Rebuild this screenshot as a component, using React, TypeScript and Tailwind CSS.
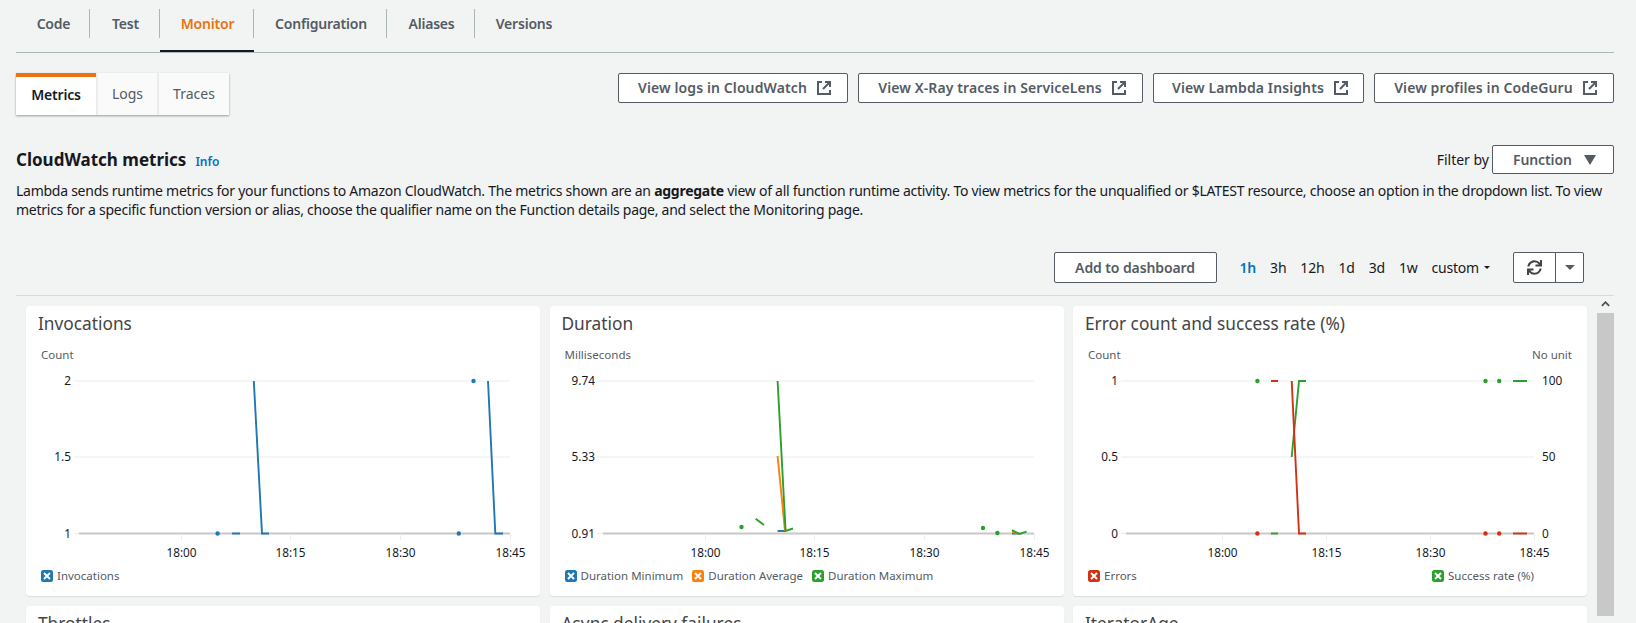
import { ReactNode } from 'react';
import { FaSync } from 'react-icons/fa';

const BLUE = '#1f77b4';
const ORANGE = '#ff7f0e';
const GREEN = '#2ca02c';
const RED = '#d13212';

function ExternalIcon() {
  return (
    <svg viewBox="0 0 16 16" className="w-4 h-4 shrink-0" fill="none" stroke="currentColor" strokeWidth="2">
      <path d="M6 2H2v12h12v-4" />
      <path d="M9 2h5v5" />
      <path d="M14 2L7 9" />
    </svg>
  );
}

function OutlineButton({ label, className }: { label: string; className: string }) {
  return (
    <button
      className={`h-[30px] pl-[4px] flex items-center justify-center gap-[9px] bg-white border border-[#545b64] rounded-[2px] text-sm font-semibold tracking-[0.1px] text-[#545b64] whitespace-nowrap ${className}`}
    >
      {label}
      <ExternalIcon />
    </button>
  );
}

function LegendItem({ color, label }: { color: string; label: string }) {
  return (
    <div className="flex items-center gap-[4px]">
      <svg viewBox="0 0 12 12" className="w-3 h-3 shrink-0">
        <rect width="12" height="12" rx="2.5" fill={color} />
        <path d="M3 3l6 6M9 3l-6 6" stroke="#fff" strokeWidth="2" />
      </svg>
      <span className="text-[11.5px] leading-4 text-[#545b64] whitespace-nowrap">{label}</span>
    </div>
  );
}

type Axis = { left: number; gridStart: number; baseStart: number; right: number; ticks: number[]; labelX: number };

function ChartFrame({
  axis,
  labels,
  rightLabels,
  children,
}: {
  axis: Axis;
  labels: string[];
  rightLabels?: string[];
  children: ReactNode;
}) {
  const rows = [381, 457, 533.5];
  const tickNames = ['18:00', '18:15', '18:30', '18:45'];
  return (
    <svg viewBox={`${axis.left} 370 514 190`} className="block w-[514px] h-[190px] mt-[7px]" fontSize="11.8" fill="#16191f">
      {rows.slice(0, 2).map((y) => (
        <line key={y} x1={axis.gridStart} x2={axis.right} y1={y} y2={y} stroke="#eaeded" />
      ))}
      <line x1={axis.gridStart} x2={axis.baseStart} y1={533.5} y2={533.5} stroke="#eaeded" />
      <line x1={axis.baseStart} x2={axis.right} y1={533.5} y2={533.5} stroke="#c8c8c8" strokeWidth="2" />
      {axis.ticks.map((x) => (
        <line key={x} x1={x} x2={x} y1={534} y2={540} stroke="#eaeded" />
      ))}
      {axis.ticks.map((x, i) => (
        <text key={x} x={x} y={557} textAnchor="middle">
          {tickNames[i]}
        </text>
      ))}
      {labels.map((t, i) => (
        <text key={t} x={axis.labelX} y={rows[i] + 4} textAnchor="end">
          {t}
        </text>
      ))}
      {rightLabels?.map((t, i) => (
        <text key={t} x={axis.right + 8} y={rows[i] + 4}>
          {t}
        </text>
      ))}
      {children}
    </svg>
  );
}

function Series({ d, color }: { d: string; color: string }) {
  return <path d={d} fill="none" stroke={color} strokeWidth="1.9" />;
}

function Dot({ x, y, color }: { x: number; y: number; color: string }) {
  return <circle cx={x} cy={y} r="2.2" fill={color} />;
}

function Card({ title, children }: { title: string; children?: ReactNode }) {
  return (
    <div className="bg-white rounded-[4px] shadow-[0_1px_1px_rgba(0,28,36,0.1)] h-[290px] overflow-hidden">
      <h3 className="text-[17.3px] leading-[24px] text-[#444] pt-[6px] pl-3">{title}</h3>
      {children}
    </div>
  );
}

function InvocationsCard() {
  return (
    <Card title="Invocations">
      <div className="text-[11.5px] leading-4 text-[#545b64] pl-[15px] mt-[11px]">Count</div>
      <ChartFrame
        axis={{ left: 26, gridStart: 74, baseStart: 79, right: 510, ticks: [181.5, 290.5, 400.5, 510.5], labelX: 71 }}
        labels={['2', '1.5', '1']}
      >
        <Series d="M253.8 381L262 533.5H269" color={BLUE} />
        <Series d="M488 381L495.3 533.5H503" color={BLUE} />
        <Series d="M232 533.5H240" color={BLUE} />
        <Dot x={217.6} y={533.5} color={BLUE} />
        <Dot x={458.8} y={533.5} color={BLUE} />
        <Dot x={473.5} y={381} color={BLUE} />
      </ChartFrame>
      <div className="flex pl-[15px] mt-[8px]">
        <LegendItem color={BLUE} label="Invocations" />
      </div>
    </Card>
  );
}

function DurationCard() {
  return (
    <Card title="Duration">
      <div className="text-[11.5px] leading-4 text-[#545b64] pl-[15px] mt-[11px]">Milliseconds</div>
      <ChartFrame
        axis={{ left: 550, gridStart: 597, baseStart: 603, right: 1034, ticks: [705.5, 814.5, 924.5, 1034.5], labelX: 595 }}
        labels={['9.74', '5.33', '0.91']}
      >
        <Series d="M777.6 531H785.6" color={BLUE} />
        <Series d="M1012 533.5H1019" color={BLUE} />
        <Series d="M777.6 456L785 531" color={ORANGE} />
        <Series d="M1012 531.5L1019.4 534" color={ORANGE} />
        <Series d="M777.6 381L785.6 531L793 528.5" color={GREEN} />
        <Series d="M755.6 518.7L764 525" color={GREEN} />
        <Series d="M1012 530L1019.4 534L1026.6 531.7" color={GREEN} />
        <Dot x={741.5} y={527} color={GREEN} />
        <Dot x={983} y={528} color={GREEN} />
        <Dot x={997.4} y={533} color={GREEN} />
      </ChartFrame>
      <div className="flex pl-[15px] mt-[8px] gap-[9px]">
        <LegendItem color={BLUE} label="Duration Minimum" />
        <LegendItem color={ORANGE} label="Duration Average" />
        <LegendItem color={GREEN} label="Duration Maximum" />
      </div>
    </Card>
  );
}

function ErrorsCard() {
  return (
    <Card title="Error count and success rate (%)">
      <div className="flex justify-between text-[11.5px] leading-4 text-[#545b64] pl-[15px] pr-[15px] mt-[11px]">
        <span>Count</span>
        <span>No unit</span>
      </div>
      <ChartFrame
        axis={{ left: 1073, gridStart: 1121, baseStart: 1126, right: 1534, ticks: [1222.5, 1326.5, 1430.5, 1534.5], labelX: 1118 }}
        labels={['1', '0.5', '0']}
        rightLabels={['100', '50', '0']}
      >
        <Series d="M1291.7 457L1299 381H1306" color={GREEN} />
        <Series d="M1291.7 381L1299 533.5H1306" color={RED} />
        <Series d="M1271 381H1278" color={RED} />
        <Series d="M1271 533.5H1278" color={GREEN} />
        <Series d="M1513 381H1527" color={GREEN} />
        <Series d="M1513 533.5H1527" color={RED} />
        <Dot x={1257.4} y={381} color={GREEN} />
        <Dot x={1257.4} y={533.5} color={RED} />
        <Dot x={1485.5} y={381} color={GREEN} />
        <Dot x={1499.2} y={381} color={GREEN} />
        <Dot x={1485.5} y={533.5} color={RED} />
        <Dot x={1499.2} y={533.5} color={RED} />
      </ChartFrame>
      <div className="flex justify-between pl-[15px] pr-[53px] mt-[8px]">
        <LegendItem color={RED} label="Errors" />
        <LegendItem color={GREEN} label="Success rate (%)" />
      </div>
    </Card>
  );
}

export default function App() {
  const tabs = [
    { name: 'Code', width: 'w-[74px]' },
    { name: 'Test', width: 'w-[70px]' },
    { name: 'Monitor', width: 'w-[94px]' },
    { name: 'Configuration', width: 'w-[133px]' },
    { name: 'Aliases', width: 'w-[88px]' },
    { name: 'Versions', width: 'w-[96px]' },
  ];
  const ranges = ['1h', '3h', '12h', '1d', '3d', '1w'];

  return (
    <div className="h-[623px] overflow-hidden bg-[#f2f3f3] pl-4 pr-[22px] font-['Noto_Sans',sans-serif] text-[#16191f]">
      <div className="flex items-start h-[53px] border-b border-[#aab7b8]">
        {tabs.map((tab, i) => (
          <div key={tab.name} className={`relative h-[52px] pt-[9px] ${tab.width}`}>
            <div
              className={`h-[29px] pl-[2px] flex items-center justify-center text-sm font-semibold tracking-[-0.2px] ${
                i < tabs.length - 1 ? 'border-r border-[#aab7b8]' : ''
              } ${tab.name === 'Monitor' ? 'text-[#ec7211]' : 'text-[#545b64]'}`}
            >
              {tab.name}
            </div>
            {tab.name === 'Monitor' && <div className="absolute left-0 right-0 bottom-0 h-[2px] bg-[#16191f]" />}
          </div>
        ))}
      </div>

      <div className="flex items-start justify-between mt-[20px]">
        <div className="flex h-[42px] shadow-[0_1px_2px_rgba(0,28,36,0.4)]">
          <div className="w-[80px] pb-[3px] bg-white border-t-4 border-[#ec7211] flex items-center justify-center text-sm font-semibold tracking-[-0.2px]">
            Metrics
          </div>
          <div className="w-[61px] bg-[#fafafa] border-l-2 border-[#eaeded] flex items-center justify-center text-sm text-[#545b64]">
            Logs
          </div>
          <div className="w-[72px] bg-[#fafafa] border-l-2 border-[#eaeded] flex items-center justify-center text-sm text-[#545b64]">
            Traces
          </div>
        </div>
        <div className="flex gap-[10px]">
          <OutlineButton label="View logs in CloudWatch" className="w-[230px]" />
          <OutlineButton label="View X-Ray traces in ServiceLens" className="w-[285px]" />
          <OutlineButton label="View Lambda Insights" className="w-[211px]" />
          <OutlineButton label="View profiles in CodeGuru" className="w-[240px]" />
        </div>
      </div>

      <div className="flex items-center justify-between mt-[30px] h-[29px]">
        <div className="flex items-baseline gap-[9px]">
          <h2 className="text-[17px] font-bold">CloudWatch metrics</h2>
          <span className="text-xs font-semibold text-[#0073bb]">Info</span>
        </div>
        <div className="flex items-center gap-[2px]">
          <span className="text-sm mr-[1px]">Filter by</span>
          <div className="w-[122px] h-[29px] bg-white border border-[#545b64] rounded-[2px] flex items-center justify-between pl-[20px] pr-[17px] text-sm font-semibold tracking-[-0.1px] text-[#545b64]">
            Function
            <svg viewBox="0 0 12 10" className="w-3 h-[10px]" fill="#545b64">
              <path d="M0 0h12L6 10z" />
            </svg>
          </div>
        </div>
      </div>

      <p className="text-sm leading-[19px] tracking-[-0.26px] mt-[7px]">
        Lambda sends runtime metrics for your functions to Amazon CloudWatch. The metrics shown are an{' '}
        <b>aggregate</b> view of all function runtime activity. To view metrics for the unqualified or $LATEST resource,
        choose an option in the dropdown list. To view metrics for a specific function version or alias, choose the
        qualifier name on the Function details page, and select the Monitoring page.
      </p>

      <div className="flex items-center justify-end mt-[33px] pb-[12px] pr-[30px] border-b border-[#d5dbdb]">
        <button className="w-[163px] h-[31px] bg-white border border-[#545b64] rounded-[2px] text-sm font-semibold tracking-[-0.1px] text-[#545b64]">
          Add to dashboard
        </button>
        <div className="flex items-center gap-[14px] ml-[23px] text-sm tracking-[-0.2px]">
          {ranges.map((r) => (
            <span key={r} className={r === '1h' ? 'font-semibold text-[#0073bb]' : ''}>
              {r}
            </span>
          ))}
          <span className="flex items-center gap-[5px]">
            custom
            <span className="border-x-[3px] border-t-[3px] border-x-transparent border-t-[#16191f]" />
          </span>
        </div>
        <div className="flex ml-[23px] h-[31px] bg-white border border-[#545b64] rounded-[2px]">
          <div className="w-[42px] flex items-center justify-center border-r border-[#545b64] text-[#444]">
            <FaSync size={15} />
          </div>
          <div className="w-[27px] flex items-center justify-center">
            <span className="border-x-[5px] border-t-[5px] border-x-transparent border-t-[#545b64]" />
          </div>
        </div>
      </div>

      <div className="flex mt-[10px]">
        <div className="grid grid-cols-[514px_514px_514px] gap-x-[9.5px] gap-y-[10px] ml-[10px]">
          <InvocationsCard />
          <DurationCard />
          <ErrorsCard />
          <Card title="Throttles" />
          <Card title="Async delivery failures" />
          <Card title="IteratorAge" />
        </div>
        <div className="relative ml-[10px] w-[17px] h-[320px] -mt-[10px] pt-[17px]">
          <svg viewBox="0 0 10 6" className="absolute top-[5px] left-[4px] w-[9px] h-[6px]" fill="none" stroke="#505050" strokeWidth="2">
            <path d="M1 5l4-4 4 4" />
          </svg>
          <div className="h-full bg-[#c8c8c8]" />
        </div>
      </div>
    </div>
  );
}
